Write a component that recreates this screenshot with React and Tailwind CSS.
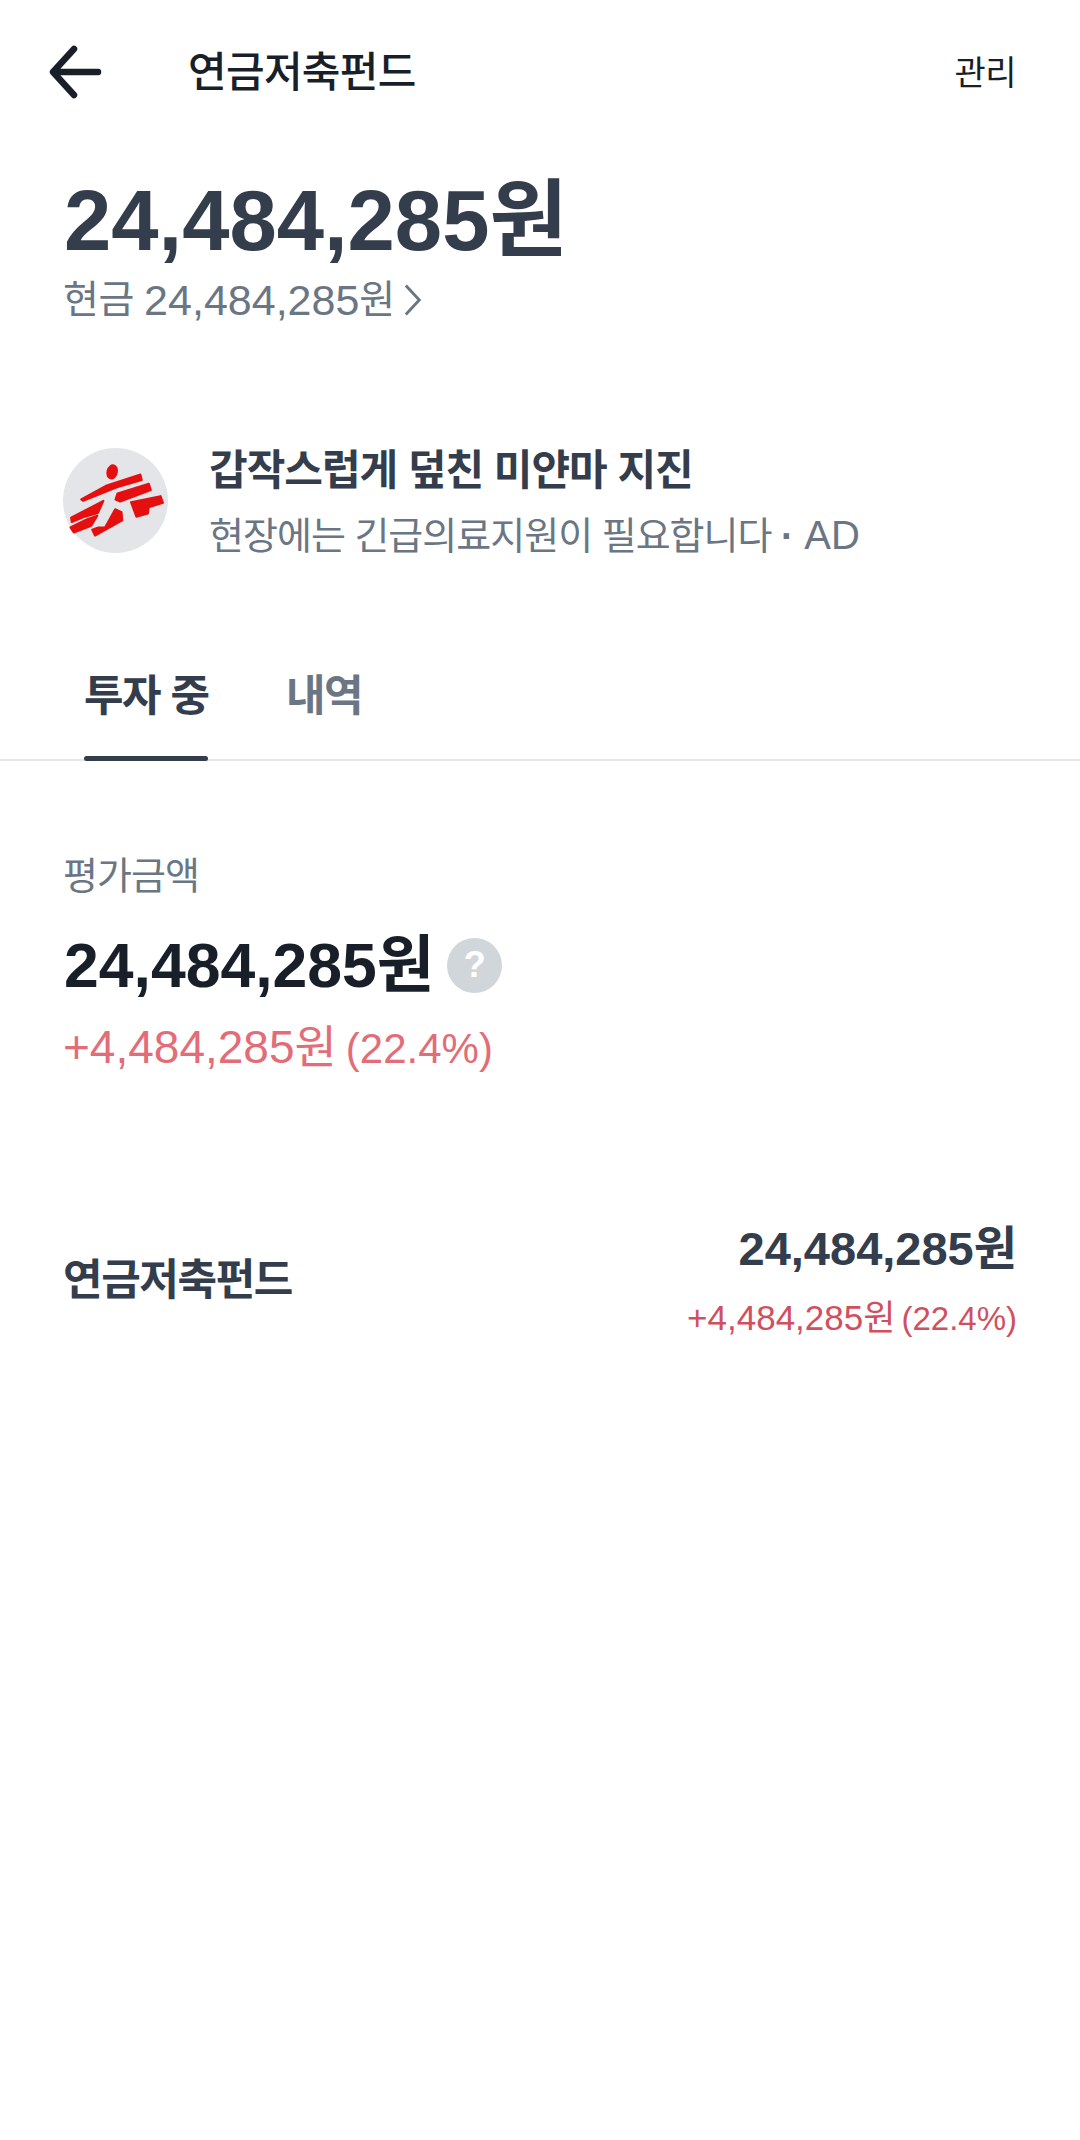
const MsfLogo = () => (
  <svg viewBox="70 55 312 312" className="w-[105px] h-[105px] shrink-0">
    <circle cx="226" cy="211" r="156" fill="#e3e5e8" />
    <g fill="#e60f0f" stroke="#e60f0f" strokeWidth="6" strokeLinejoin="round">
      <ellipse cx="216" cy="126" rx="14" ry="20" transform="rotate(15 216 126)" />
      <path d="M124 208 L200 166 L300 134 L304 150 L230 172 L130 212 Z" />
      <path d="M232 190 L325 161 L331 180 L240 214 L226 208 Z" />
      <path d="M272 216 L360 198 L367 218 L325 231 L322 250 L288 259 Z" />
      <path d="M94 262 L190 212 L174 248 L135 259 L96 275 Z" />
      <path d="M92 291 L140 267 L172 256 L154 286 L102 306 Z" />
      <path d="M157 298 L175 291 L195 291 L225 237 L244 246 L246 270 L165 315 Z" />
    </g>
  </svg>
);

export default function App() {
  return (
    <div className="w-[1080px] h-[2140px] bg-white font-['Liberation_Sans','Noto_Sans_CJK_KR',sans-serif] overflow-hidden">
      {/* header */}
      <div className="h-[144px] flex items-center pl-[44px] pr-[64px]">
        <svg viewBox="44 40 62 62" className="w-[62px] h-[62px] shrink-0 text-[#191f28]" fill="none" stroke="currentColor" strokeWidth="6.5" strokeLinecap="round" strokeLinejoin="round">
          <path d="M98 71 H54 M74 48 L53 71 L74 94" />
        </svg>
        <div className="ml-[82px] flex-1 text-[42px] font-medium tracking-[-0.7px] text-[#191f28]">연금저축펀드</div>
        <div className="text-[34px] text-[#191f28] tracking-[-0.5px] pt-[2px]">관리</div>
      </div>

      {/* balance */}
      <div className="px-[63px] pt-[27px]">
        <div className="text-[85px] leading-[100px] font-bold text-[#333d4b] pl-[1px]">24,484,285원</div>
        <div className="flex items-center text-[39px] leading-[50px] tracking-[-0.5px] text-[#6b7684] mt-[4px]">
          현금&nbsp;<span className="text-[43px] tracking-[0px]">24,484,285</span>원
          <svg viewBox="0 0 20 36" className="w-[18px] h-[36px] ml-[9px]" fill="none" stroke="#6b7684" strokeWidth="3.2">
            <path d="M2 2 L17 18 L2 34" />
          </svg>
        </div>
      </div>

      {/* ad banner */}
      <div className="flex items-center px-[63px] mt-[115px]">
        <MsfLogo />
        <div className="ml-[41px] pt-[3px]">
          <div className="text-[42px] leading-[56px] font-bold tracking-[-1px] text-[#333d4b]">갑작스럽게 덮친 미얀마 지진</div>
          <div className="text-[38px] leading-[50px] tracking-[-1px] text-[#6b7684] mt-[11px]">
            현장에는 긴급의료지원이 필요합니다 <span className="font-bold">·</span> <span className="text-[40px] tracking-[0px] ml-[2px]">AD</span>
          </div>
        </div>
      </div>

      {/* tabs */}
      <div className="flex h-[124px] mt-[76px] pl-[84px] border-b-2 border-[#e5e8eb]">
        <div className="relative w-[124px] pt-[29px] text-[43px] leading-[60px] font-bold tracking-[-1.5px] text-[#333d4b] whitespace-nowrap">
          투자 중
          <div className="absolute left-0 right-0 -bottom-[2px] h-[5px] rounded-full bg-[#333d4b]" />
        </div>
        <div className="ml-[78px] pt-[29px] text-[43px] leading-[60px] font-bold tracking-[-1.5px] text-[#6b7684]">내역</div>
      </div>

      {/* valuation */}
      <div className="px-[63px] pt-[90px]">
        <div className="text-[38px] leading-[50px] tracking-[-1px] text-[#6b7684]">평가금액</div>
        <div className="flex items-center mt-[29px]">
          <div className="text-[62.5px] leading-[70px] font-bold text-[#191f28] pl-[1px]">24,484,285원</div>
          <div className="ml-[13px] w-[55px] h-[55px] rounded-full bg-[#d1d6db] flex items-center justify-center text-white text-[36px] font-bold">?</div>
        </div>
        <div className="flex items-baseline gap-[9px] leading-[56px] text-[#e26d78] mt-[19px]">
          <span className="text-[46px]">+4,484,285원</span>
          <span className="text-[42px]">(22.4%)</span>
        </div>
      </div>

      {/* fund row */}
      <div className="flex items-center justify-between px-[63px] mt-[142px]">
        <div className="text-[43px] font-bold tracking-[-1.4px] text-[#333d4b]">연금저축펀드</div>
        <div className="flex flex-col items-end">
          <div className="text-[47px] leading-[60px] font-bold text-[#333d4b]">24,484,285원</div>
          <div className="flex items-baseline gap-[6px] leading-[46px] text-[#d0505f] mt-[16px]">
            <span className="text-[35px]">+4,484,285원</span>
            <span className="text-[33px]">(22.4%)</span>
          </div>
        </div>
      </div>
    </div>
  );
}
